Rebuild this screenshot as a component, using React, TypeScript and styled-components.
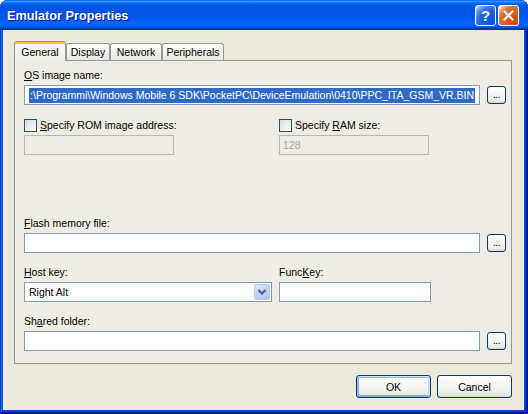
import React from 'react';
import styled, { createGlobalStyle } from 'styled-components';

const Global = createGlobalStyle`
  html, body { margin: 0; padding: 0; background: #ffffff; }
  body {
    font-family: "Liberation Sans", Arial, sans-serif;
    font-size: 10.5px;
    color: #000;
  }
  #root { width: 528px; height: 414px; }
`;

const Window = styled.div`
  width: 528px;
  height: 414px;
  display: flex;
  flex-direction: column;
  background: #0054e3;
  border-radius: 8px 8px 0 0;
  overflow: hidden;
  box-shadow: inset -1px -1px #00138c, inset 1px 1px #0831d9, inset -2px -2px #001ea0,
    inset 2px 2px #166aee, inset -3px -3px #003bda, inset 3px 3px #0855dd;
`;

const TitleBar = styled.div`
  height: 30px;
  flex: none;
  box-sizing: border-box;
  display: flex;
  align-items: center;
  justify-content: space-between;
  padding: 1px 9px 0 7px;
  background: linear-gradient(
    to bottom,
    #0058ee 0%,
    #3593ff 4%,
    #288eff 6%,
    #127dff 8%,
    #036ffc 10%,
    #0262ee 14%,
    #0057e5 20%,
    #0054e3 24%,
    #0055eb 56%,
    #005bf5 66%,
    #026afe 76%,
    #0062ef 86%,
    #0052d6 92%,
    #0040ab 94%,
    #003092 100%
  );
`;

const Title = styled.div`
  color: #fff;
  font-family: "Liberation Sans", Arial, sans-serif;
  font-weight: bold;
  font-size: 12.7px;
  text-shadow: 1px 1px #0f1089;
`;

const CaptionButtons = styled.div`
  display: flex;
  gap: 2px;
`;

const CaptionButton = styled.div<{ $variant: 'help' | 'close' }>`
  width: 21px;
  height: 21px;
  box-sizing: border-box;
  border: 1px solid #fff;
  border-radius: 3px;
  display: flex;
  align-items: center;
  justify-content: center;
  color: #fff;
  font-family: "Liberation Sans", Arial, sans-serif;
  font-weight: bold;
  font-size: 15px;
  background: ${(p) =>
    p.$variant === 'help'
      ? 'radial-gradient(circle at 90% 90%, #0054e9 0%, #2263d5 55%, #4479e4 70%, #a3bbec 90%, #ffffff 100%)'
      : 'radial-gradient(circle at 90% 90%, #cc4600 0%, #dc6527 55%, #cd7546 70%, #ffccb2 90%, #ffffff 100%)'};
`;

const Body = styled.div`
  flex: 1;
  margin: 0 4px 4px 3px;
  background: #ece9d8;
  padding: 0 12px 0 11px;
  display: flex;
  flex-direction: column;
`;

const TabStrip = styled.div`
  display: flex;
  align-items: flex-end;
  height: 19px;
  margin-top: 11px;
  position: relative;
  z-index: 1;
`;

const Tab = styled.div<{ $active?: boolean; $w: number }>`
  width: ${(p) => p.$w}px;
  box-sizing: border-box;
  height: ${(p) => (p.$active ? 20 : 17)}px;
  margin-bottom: ${(p) => (p.$active ? -1 : 0)}px;
  border: 1px solid #919b9c;
  border-bottom: none;
  border-top-color: ${(p) => (p.$active ? '#e68b2c' : '#919b9c')};
  border-radius: 3px 3px 0 0;
  background: ${(p) =>
    p.$active ? 'linear-gradient(#fbfbf8, #efede3)' : 'linear-gradient(#ffffff, #f0efea 70%, #e8e6de)'};
  box-shadow: ${(p) => (p.$active ? 'inset 0 2px #ffc83c' : 'none')};
  text-align: center;
  line-height: 13px;
  padding-top: ${(p) => (p.$active ? 4 : 2)}px;
  white-space: nowrap;
`;

const Pane = styled.div`
  height: 304px;
  box-sizing: border-box;
  border: 1px solid #919b9c;
  background: #efede3;
  padding: 8px 5px 0 9px;
  display: flex;
  flex-direction: column;
`;

const Label = styled.div`
  height: 13px;
  line-height: 13px;
  white-space: nowrap;
`;

const Group = styled.div<{ $mt?: number }>`
  display: flex;
  flex-direction: column;
  gap: 3px;
  margin-top: ${(p) => p.$mt ?? 0}px;
`;

const FileRow = styled.div`
  display: flex;
  align-items: center;
  gap: 7px;
`;

const TextBox = styled.div<{ $w?: number; $disabled?: boolean; $padRight?: number }>`
  height: 20px;
  min-width: 0;
  box-sizing: border-box;
  border: 1px solid ${(p) => (p.$disabled ? '#b5b7b0' : '#7f9db9')};
  background: ${(p) => (p.$disabled ? 'transparent' : '#ffffff')};
  ${(p) => (p.$w ? `width: ${p.$w}px; flex: none;` : 'flex: 1;')}
  padding: 0 ${(p) => p.$padRight ?? 3}px 0 2px;
  color: ${(p) => (p.$disabled ? '#aca899' : '#000')};
  display: flex;
  align-items: center;
  white-space: nowrap;
`;

const Clip = styled.div`
  flex: 1;
  min-width: 0;
  overflow: hidden;
  display: flex;
  justify-content: flex-end;
`;

const Selection = styled.span`
  flex: none;
  background: #316ac5;
  color: #fff;
  line-height: 15px;
  padding: 0 1px;
`;

const Plain = styled.span`
  padding-left: 1px;
`;

const SmallButton = styled.div`
  width: 19px;
  height: 18px;
  box-sizing: border-box;
  flex: none;
  border: 1px solid #003c74;
  border-radius: 3px;
  background: linear-gradient(180deg, #ffffff 0%, #ecebe6 86%, #d6d0c5 100%);
  display: flex;
  align-items: flex-end;
  justify-content: center;
  padding-bottom: 3px;
  font-size: 10px;
  line-height: 10px;
  letter-spacing: -0.5px;
`;

const PairRow = styled.div<{ $mt?: number }>`
  display: grid;
  grid-template-columns: 255px 1fr;
  margin-top: ${(p) => p.$mt ?? 0}px;
`;

const CheckRow = styled.div`
  display: flex;
  align-items: center;
  gap: 3px;
  height: 14px;
`;

const CheckBox = styled.div`
  width: 13px;
  height: 13px;
  box-sizing: border-box;
  border: 1px solid #1c5180;
  background: linear-gradient(135deg, #dcdcd7 0%, #f0f0ea 60%, #ffffff 100%);
`;

const SelectBox = styled.div<{ $w: number }>`
  width: ${(p) => p.$w}px;
  height: 20px;
  box-sizing: border-box;
  border: 1px solid #7f9db9;
  background: #fff;
  display: flex;
  align-items: center;
  padding: 1px;
`;

const SelectValue = styled.div`
  flex: 1;
  padding-left: 3px;
`;

const DropButton = styled.div`
  width: 16px;
  height: 16px;
  box-sizing: border-box;
  border: 1px solid #bbcaf3;
  border-radius: 2px;
  background: linear-gradient(160deg, #dfe8fe 0%, #c2d3fc 45%, #b3c7f5 100%);
  display: flex;
  align-items: center;
  justify-content: center;
`;

const ButtonRow = styled.div`
  display: flex;
  justify-content: flex-end;
  gap: 6px;
  margin-top: 11px;
`;

const DialogButton = styled.div<{ $default?: boolean }>`
  width: 75px;
  height: 23px;
  box-sizing: border-box;
  border: 1px solid #003c74;
  border-radius: 3px;
  background: linear-gradient(180deg, #ffffff 0%, #ecebe6 86%, #d6d0c5 100%);
  box-shadow: ${(p) =>
    p.$default
      ? 'inset -1px 1px #cee7ff, inset 1px 2px #98b8ea, inset -2px 2px #bcd4f6, inset 1px -1px #89ade4, inset 2px -2px #89ade4'
      : 'none'};
  display: flex;
  align-items: center;
  justify-content: center;
`;

const Chevron = () => (
  <svg width="8" height="6" viewBox="0 0 8 6">
    <path d="M0.5 1 L4 4.5 L7.5 1" fill="none" stroke="#4d6185" strokeWidth="2" />
  </svg>
);

const CloseIcon = () => (
  <svg width="11" height="11" viewBox="0 0 11 11">
    <path d="M1.5 1.5 L9.5 9.5 M9.5 1.5 L1.5 9.5" stroke="#fff" strokeWidth="2" strokeLinecap="square" />
  </svg>
);

const tabs = [
  { label: 'General', w: 52 },
  { label: 'Display', w: 44 },
  { label: 'Network', w: 52 },
  { label: 'Peripherals', w: 62 },
];

export default function App() {
  return (
    <>
      <Global />
      <Window>
        <TitleBar>
          <Title>Emulator Properties</Title>
          <CaptionButtons>
            <CaptionButton $variant="help">?</CaptionButton>
            <CaptionButton $variant="close">
              <CloseIcon />
            </CaptionButton>
          </CaptionButtons>
        </TitleBar>
        <Body>
          <TabStrip>
            {tabs.map((t, i) => (
              <Tab key={t.label} $w={t.w} $active={i === 0}>
                {t.label}
              </Tab>
            ))}
          </TabStrip>
          <Pane>
            <Group>
              <Label>
                <u>O</u>S image name:
              </Label>
              <FileRow>
                <TextBox $padRight={4}>
                  <Clip>
                    <Selection>
                      :\Programmi\Windows Mobile 6 SDK\PocketPC\DeviceEmulation\0410\PPC_ITA_GSM_VR.BIN
                    </Selection>
                  </Clip>
                </TextBox>
                <SmallButton>...</SmallButton>
              </FileRow>
            </Group>

            <PairRow $mt={13}>
              <Group>
                <CheckRow>
                  <CheckBox />
                  <Label>
                    <u>S</u>pecify ROM image address:
                  </Label>
                </CheckRow>
                <TextBox $w={150} $disabled />
              </Group>
              <Group>
                <CheckRow>
                  <CheckBox />
                  <Label>
                    Specify <u>R</u>AM size:
                  </Label>
                </CheckRow>
                <TextBox $w={150} $disabled>
                  <Plain>128</Plain>
                </TextBox>
              </Group>
            </PairRow>

            <Group $mt={62}>
              <Label>
                <u>F</u>lash memory file:
              </Label>
              <FileRow>
                <TextBox />
                <SmallButton>...</SmallButton>
              </FileRow>
            </Group>

            <PairRow $mt={13}>
              <Group>
                <Label>
                  <u>H</u>ost key:
                </Label>
                <SelectBox $w={248}>
                  <SelectValue>Right Alt</SelectValue>
                  <DropButton>
                    <Chevron />
                  </DropButton>
                </SelectBox>
              </Group>
              <Group>
                <Label>
                  Func<u>K</u>ey:
                </Label>
                <TextBox $w={152} />
              </Group>
            </PairRow>

            <Group $mt={13}>
              <Label>
                Sh<u>a</u>red folder:
              </Label>
              <FileRow>
                <TextBox />
                <SmallButton>...</SmallButton>
              </FileRow>
            </Group>
          </Pane>
          <ButtonRow>
            <DialogButton $default>OK</DialogButton>
            <DialogButton>Cancel</DialogButton>
          </ButtonRow>
        </Body>
      </Window>
    </>
  );
}
